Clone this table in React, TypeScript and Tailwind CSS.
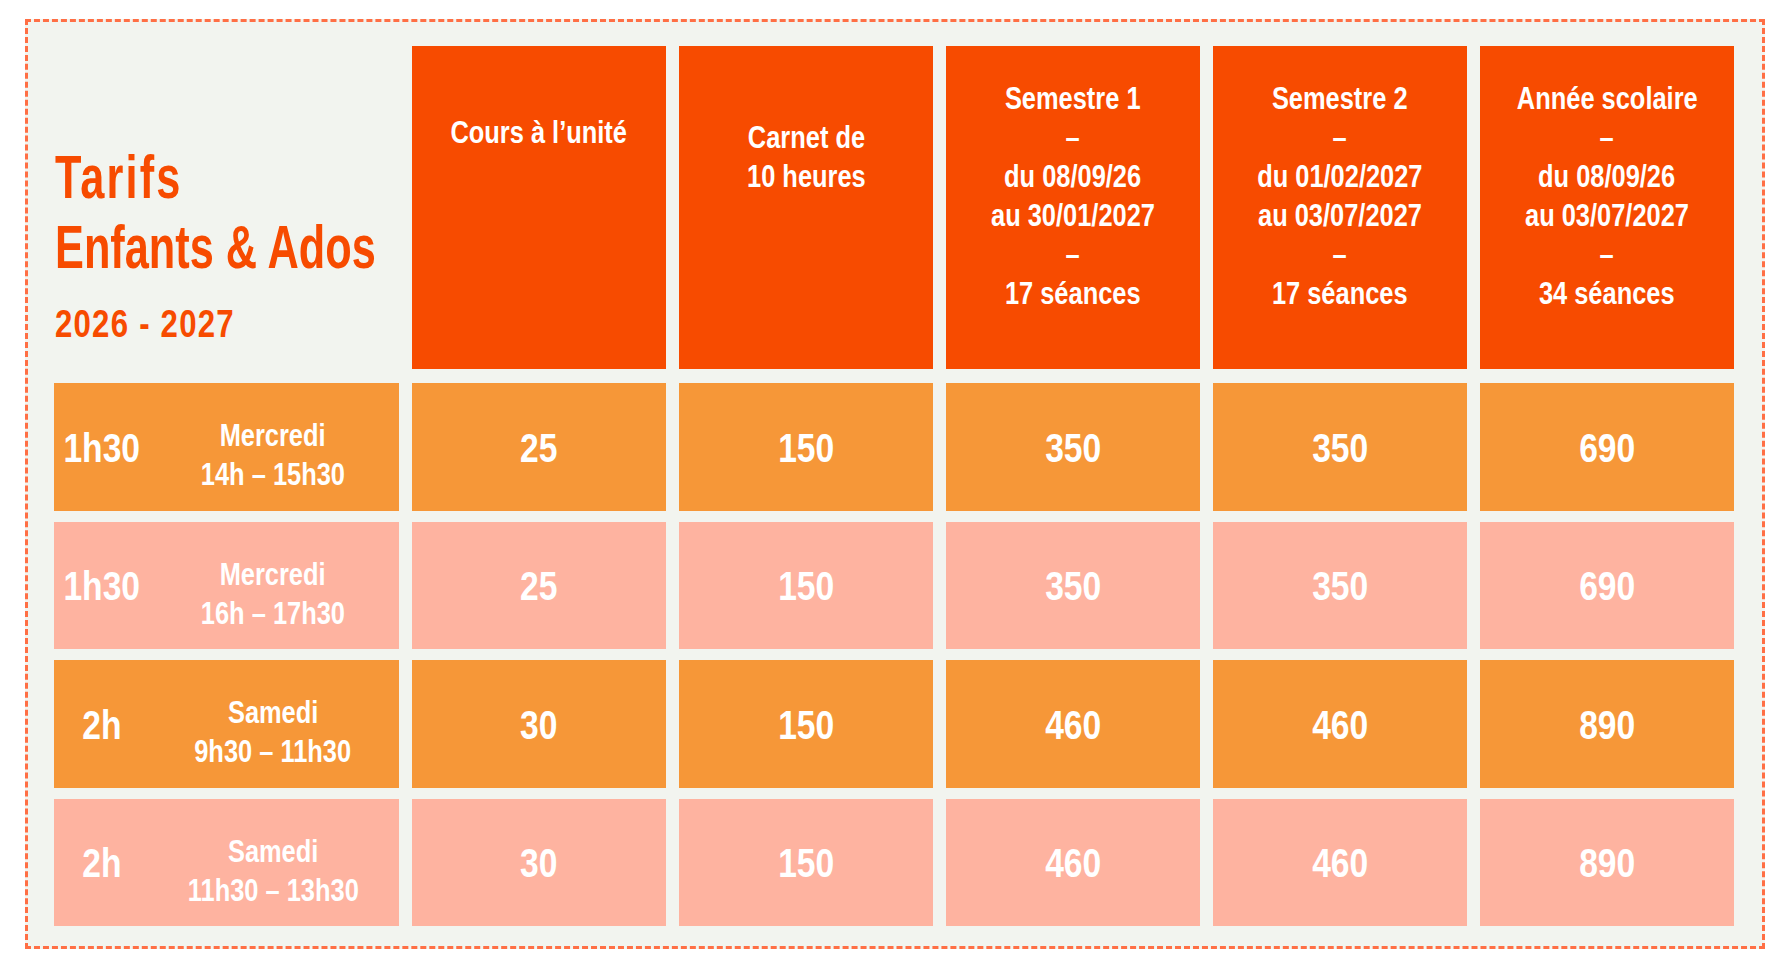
import React from 'react';

type Row = {
  duration: string;
  day: string;
  hours: string;
  prices: number[];
  tone: 'orange' | 'salmon';
};

// pas de police condensée installée : Arial (Liberation Sans) resserrée horizontalement
const FONT = { fontFamily: '"Liberation Sans", Arial, sans-serif' };

const rows: Row[] = [
  { duration: '1h30', day: 'Mercredi', hours: '14h – 15h30', prices: [25, 150, 350, 350, 690], tone: 'orange' },
  { duration: '1h30', day: 'Mercredi', hours: '16h – 17h30', prices: [25, 150, 350, 350, 690], tone: 'salmon' },
  { duration: '2h', day: 'Samedi', hours: '9h30 – 11h30', prices: [30, 150, 460, 460, 890], tone: 'orange' },
  { duration: '2h', day: 'Samedi', hours: '11h30 – 13h30', prices: [30, 150, 460, 460, 890], tone: 'salmon' },
];

function Narrow({ children, className = 'scale-x-[0.82] origin-center' }: { children: React.ReactNode; className?: string }) {
  return <span className={`inline-block whitespace-nowrap ${className}`}>{children}</span>;
}

function HeaderCell({ lines, pad }: { lines: string[]; pad: string }) {
  return (
    <div className={`mb-[3px] bg-[#f74b00] text-white font-bold text-[31px] leading-[39px] text-center ${pad}`}>
      {lines.map((l, i) => (
        <div key={i}>
          <Narrow>{l}</Narrow>
        </div>
      ))}
    </div>
  );
}

export default function App() {
  return (
    <div className="min-h-screen bg-white pt-[19px] pl-[25px]" style={FONT}>
      <div className="w-[1740px] border-[3px] border-dashed border-[#ff6f45] bg-[#f2f4ef] pt-[24px] pl-[26px] pr-[28px] pb-[20px]">
        <div className="grid grid-cols-[345px_repeat(5,254px)] grid-rows-[326px_128px_127px_128px_127px] gap-x-[13px] gap-y-[11px]">
          {/* titre */}
          <div className="mb-[3px] pt-[96px] pl-[1px] text-[#f74b00] font-bold">
            <div className="text-[61px] leading-[70px]">
              <Narrow className="scale-x-[0.71] origin-left tracking-[3px]">Tarifs</Narrow>
            </div>
            <div className="text-[61px] leading-[70px]">
              <Narrow className="scale-x-[0.71] origin-left">Enfants &amp; Ados</Narrow>
            </div>
            <div className="mt-[20px] text-[38px] leading-[44px] tracking-[1.5px]">
              <Narrow className="scale-x-[0.82] origin-left">2026 - 2027</Narrow>
            </div>
          </div>
          <HeaderCell lines={['Cours à l’unité']} pad="pt-[67px]" />
          <HeaderCell lines={['Carnet de', '10 heures']} pad="pt-[72px]" />
          <HeaderCell lines={['Semestre 1', '–', 'du 08/09/26', 'au 30/01/2027', '–', '17 séances']} pad="pt-[33px]" />
          <HeaderCell lines={['Semestre 2', '–', 'du 01/02/2027', 'au 03/07/2027', '–', '17 séances']} pad="pt-[33px]" />
          <HeaderCell lines={['Année scolaire', '–', 'du 08/09/26', 'au 03/07/2027', '–', '34 séances']} pad="pt-[33px]" />

          {rows.map((r, i) => {
            const bg = r.tone === 'orange' ? 'bg-[#f69738]' : 'bg-[#feb3a0]';
            return (
              <React.Fragment key={i}>
                <div className={`${bg} grid grid-cols-[93px_1fr] text-white font-bold`}>
                  <div className="flex items-center justify-center pl-[3px] pt-[3px] text-[41px]">
                    <Narrow>{r.duration}</Narrow>
                  </div>
                  <div className="flex flex-col items-center justify-center pt-[16px] text-[31px] leading-[39px]">
                    <Narrow>{r.day}</Narrow>
                    <Narrow>{r.hours}</Narrow>
                  </div>
                </div>
                {r.prices.map((p, j) => (
                  <div key={j} className={`${bg} flex items-center justify-center pt-[3px] text-white font-bold text-[41px]`}>
                    <Narrow>{p}</Narrow>
                  </div>
                ))}
              </React.Fragment>
            );
          })}
        </div>
      </div>
    </div>
  );
}
